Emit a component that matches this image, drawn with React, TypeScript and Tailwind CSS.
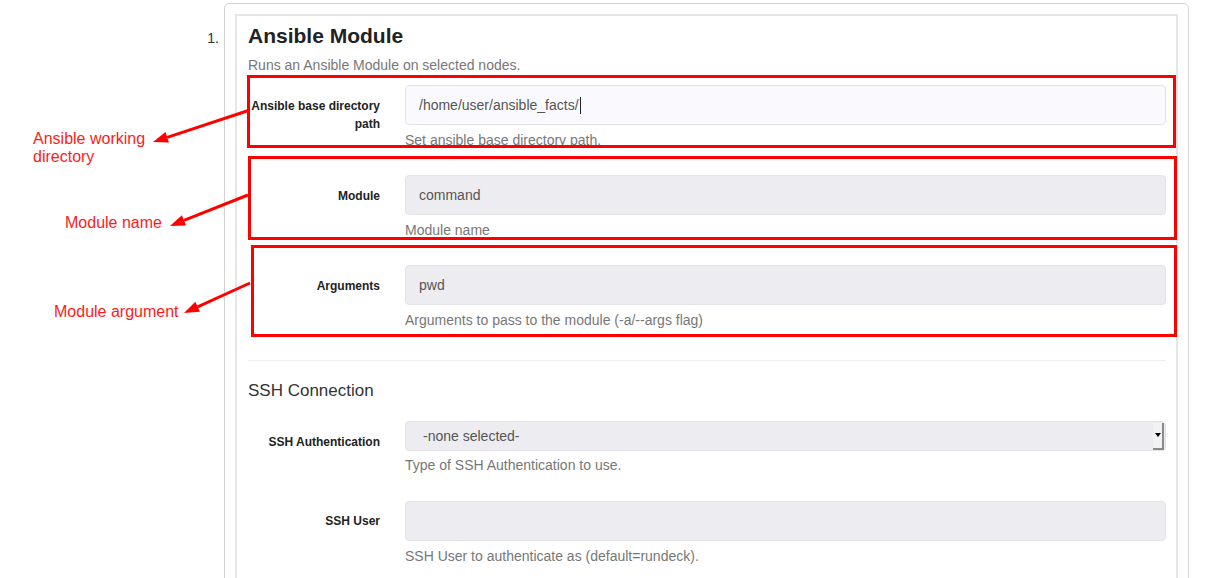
import React from 'react';

// Red callout arrows: [fromX, fromY, tipX, tipY]
const arrows = [
  [250, 110, 153, 142],
  [248, 195, 170, 226],
  [250, 283, 184, 313],
];

function Arrow({ x1, y1, x2, y2 }: { x1: number; y1: number; x2: number; y2: number }) {
  const dx = x2 - x1;
  const dy = y2 - y1;
  const len = Math.sqrt(dx * dx + dy * dy);
  const ux = dx / len;
  const uy = dy / len;
  const bx = x2 - ux * 15;
  const by = y2 - uy * 15;
  const px = -uy * 5.5;
  const py = ux * 5.5;
  return (
    <g>
      <line x1={x1} y1={y1} x2={bx} y2={by} stroke="#ff0000" strokeWidth={3} />
      <polygon points={`${x2},${y2} ${bx + px},${by + py} ${bx - px},${by - py}`} fill="#ff0000" />
    </g>
  );
}

function FormRow({
  label,
  help,
  value,
  light,
  labelPad = 'pt-3',
}: {
  label: React.ReactNode;
  help: string;
  value?: string;
  light?: boolean;
  labelPad?: string;
}) {
  return (
    <div className="flex mb-[25px]">
      <div className={`w-[132px] text-right text-[12px] leading-[18px] font-bold text-[#222] ${labelPad}`}>{label}</div>
      <div className="flex-1 ml-[25px]">
        <div
          className={`h-[40px] rounded-[4px] border border-[#e2e2e8] flex items-center px-[13px] text-[14px] text-[#555] ${
            light ? 'bg-[#fafafe]' : 'bg-[#ededf1]'
          }`}
        >
          {value}
          {light && <span className="w-px h-[17px] bg-[#222] ml-px" />}
        </div>
        <div className="mt-[5px] text-[14px] leading-[20px] text-[#777]">{help}</div>
      </div>
    </div>
  );
}

export default function App() {
  return (
    <div className="relative w-[1209px] h-[578px] overflow-hidden bg-white font-['Liberation_Sans',Arial,sans-serif]">
      <div className="flex">
        {/* Step number */}
        <div className="w-[224px] text-right pr-[5px] pt-[28px] text-[14px] leading-[20px] text-[#333]">1.</div>

        {/* Card */}
        <div className="w-[965px] mt-[3px] border border-[#d3d3cf] rounded-[5px] p-[10px] pb-0">
          <div className="border-2 border-b-0 border-[#e6e6e6] pl-[11px] pr-[10px] pt-[8px] pb-[60px]">
            <h1 className="text-[21px] leading-[24px] font-bold text-[#222]">Ansible Module</h1>
            <p className="mt-[7px] text-[14px] leading-[20px] text-[#777]">Runs an Ansible Module on selected nodes.</p>

            <div className="mt-[10px]">
              <FormRow
                label={
                  <>
                    Ansible base directory
                    <br />
                    path
                  </>
                }
                value="/home/user/ansible_facts/"
                help="Set ansible base directory path."
                light
              />
              <FormRow label="Module" value="command" help="Module name" />
              <FormRow label="Arguments" value="pwd" help="Arguments to pass to the module (-a/--args flag)" />
            </div>

            <hr className="mt-[30px] border-t border-[#eeeeee] mb-[18px]" />

            <h2 className="text-[17px] leading-[24px] text-[#333]">SSH Connection</h2>

            <div className="mt-[18px]">
              {/* SSH Authentication select */}
              <div className="flex mb-[26px]">
                <div className="w-[132px] text-right text-[12px] leading-[18px] font-bold text-[#222] pt-[12px]">
                  SSH Authentication
                </div>
                <div className="flex-1 ml-[25px]">
                  <div className="h-[30px] rounded-[4px] border border-[#e2e2e8] bg-[#ededf1] flex items-center">
                    <span className="flex-1 pl-[17px] text-[14px] text-[#555]">-none selected-</span>
                    <span className="w-[11px] h-[27px] mr-[1px] bg-[#f2f2f2] border-r-2 border-b-2 border-[#8a8a8a] flex items-center justify-center">
                      <span className="w-0 h-0 border-l-[3px] border-r-[3px] border-t-[4px] border-l-transparent border-r-transparent border-t-black" />
                    </span>
                  </div>
                  <div className="mt-[4px] text-[14px] leading-[20px] text-[#777]">Type of SSH Authentication to use.</div>
                </div>
              </div>

              <FormRow label="SSH User" help="SSH User to authenticate as (default=rundeck)." labelPad="pt-[11px]" />
            </div>
          </div>
        </div>
      </div>

      {/* Annotation boxes */}
      <div className="absolute left-[247px] top-[75px] w-[929px] h-[73px] border-[3px] border-[#ff0000]" />
      <div className="absolute left-[248px] top-[156px] w-[929px] h-[84px] border-[3px] border-[#ff0000]" />
      <div className="absolute left-[251px] top-[245px] w-[926px] h-[92px] border-[3px] border-[#ff0000]" />

      {/* Annotation arrows */}
      <svg className="absolute left-0 top-0" width={1209} height={578}>
        {arrows.map(([x1, y1, x2, y2], i) => (
          <Arrow key={i} x1={x1} y1={y1} x2={x2} y2={y2} />
        ))}
      </svg>

      {/* Annotation labels */}
      <div className="absolute left-[33px] top-[130px] text-[16px] leading-[18px] text-[#ff1a1a]">
        Ansible working
        <br />
        directory
      </div>
      <div className="absolute left-[65px] top-[214px] text-[16px] leading-[18px] text-[#ff1a1a]">Module name</div>
      <div className="absolute left-[54px] top-[303px] text-[16px] leading-[18px] text-[#ff1a1a]">Module argument</div>
    </div>
  );
}
